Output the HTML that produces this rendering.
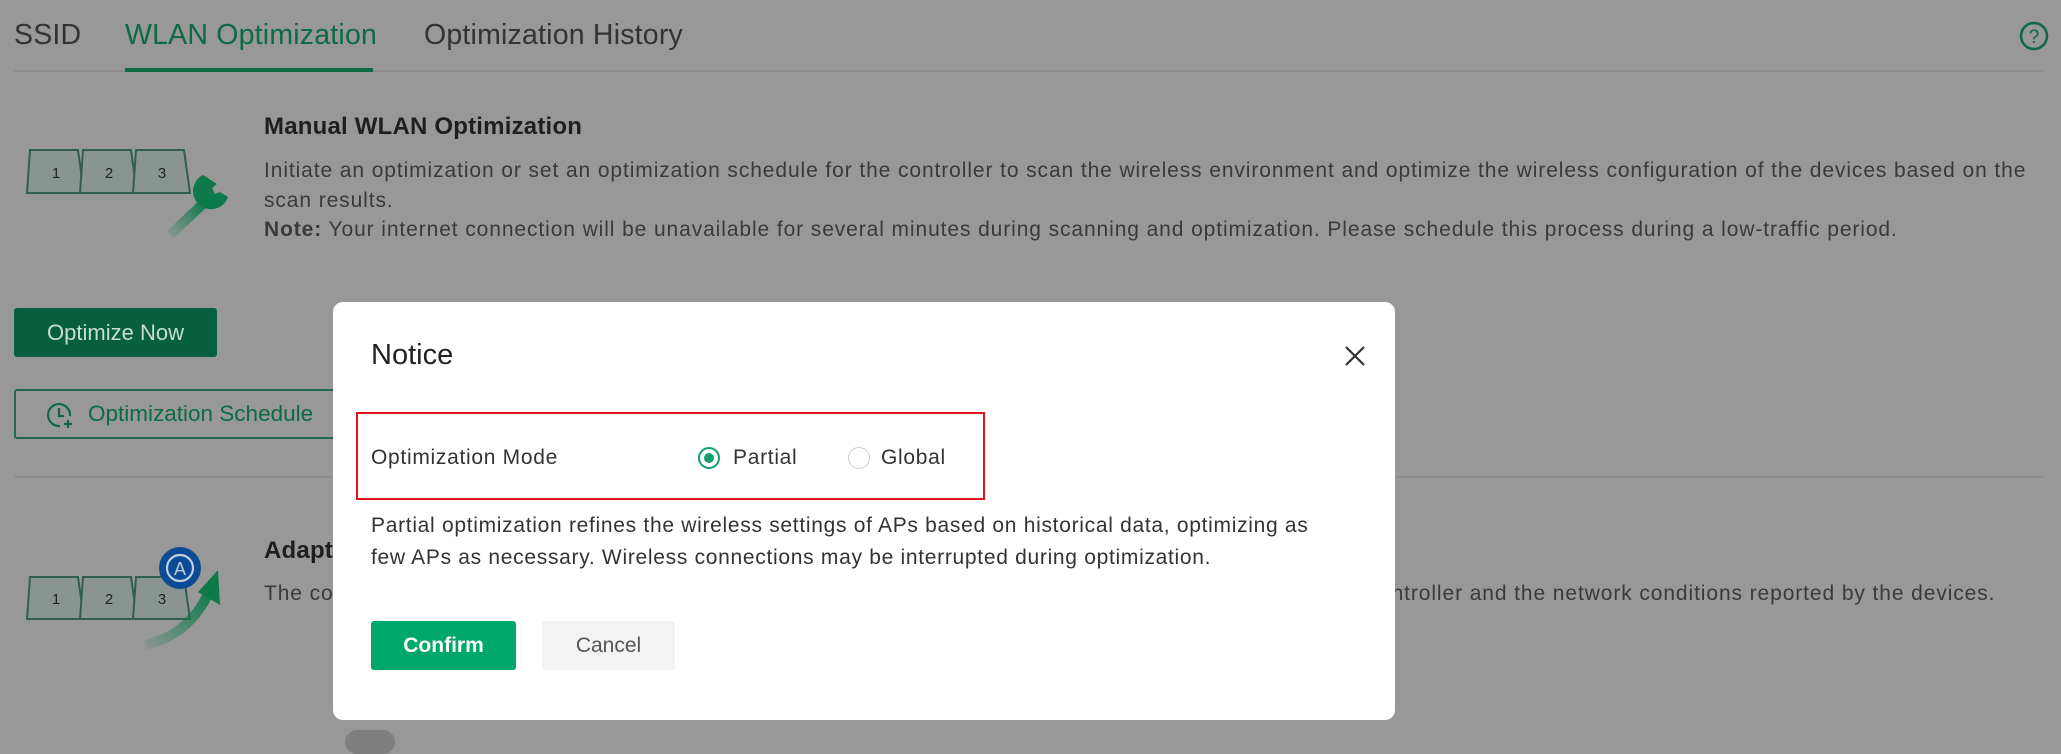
<!DOCTYPE html>
<html><head><meta charset="utf-8"><style>
*{margin:0;padding:0;box-sizing:border-box}
body{width:2061px;height:739px;background:#989898;font-family:"Liberation Sans",sans-serif;position:relative;overflow:hidden;color:#3c3c3c}
.a{position:absolute;white-space:nowrap}
.tab{font-size:28.5px;top:19px;color:#333;letter-spacing:0.2px}
.t{font-size:21px;color:#3a3a3a;letter-spacing:0.9px}
.h{font-size:24px;color:#1f1f1f;font-weight:bold;letter-spacing:0.2px}
.modal{position:absolute;left:333px;top:302px;width:1062px;height:418px;background:#fff;border-radius:10px}
.m{font-size:21px;color:#333;letter-spacing:0.7px}
</style></head><body>
<div class="a tab" style="left:14px">SSID</div>
<div class="a tab" style="left:125px;color:#0c6a45">WLAN Optimization</div>
<div class="a tab" style="left:424px">Optimization History</div>
<div class="a" style="left:14px;top:70px;width:2030px;height:2px;background:#8e8e8e"></div>
<div class="a" style="left:125px;top:68px;width:248px;height:4px;background:#0c6a45"></div>
<svg class="a" style="left:2019px;top:21px" width="30" height="30" viewBox="0 0 30 30"><circle cx="15" cy="15" r="13" fill="none" stroke="#0c6a45" stroke-width="2.5"/><text x="15" y="22" text-anchor="middle" font-size="19" font-family="Liberation Sans" fill="#0c6a45">?</text></svg>

<svg class="a" style="left:20px;top:140px" width="220" height="100" viewBox="0 0 220 100">
<defs><linearGradient id="g" x1="1" y1="0" x2="0" y2="1"><stop offset="0" stop-color="#0e7a4c"/><stop offset="1" stop-color="#0e7a4c" stop-opacity="0.1"/></linearGradient></defs>
<g fill="#8a9591" stroke="#315e52" stroke-width="2"><path d="M10 10H58L64 53H7Z"/><path d="M63 10H111L117 53H60Z"/><path d="M116 10H164L170 53H113Z"/></g>
<g font-size="15" fill="#222" text-anchor="middle"><text x="36" y="38">1</text><text x="89" y="38">2</text><text x="142" y="38">3</text></g>
<path d="M150 95L185 62" stroke="url(#g)" stroke-width="10"/>
<path d="M183 35a18 18 0 1 0 25 22l-8-5 -5 2 -3-6 5-4z" fill="#0e7a4c"/>
</svg>

<div class="a h" style="left:264px;top:113px">Manual WLAN Optimization</div>
<div class="a t" style="left:264px;top:159px">Initiate an optimization or set an optimization schedule for the controller to scan the wireless environment and optimize the wireless configuration of the devices based on the</div>
<div class="a t" style="left:264px;top:189px">scan results.</div>
<div class="a t" style="left:264px;top:218px"><b>Note:</b> Your internet connection will be unavailable for several minutes during scanning and optimization. Please schedule this process during a low-traffic period.</div>

<div class="a" style="left:14px;top:308px;width:203px;height:49px;background:#06603f;border-radius:3px;color:#c9dcd2;font-size:22px;text-align:center;line-height:49px">Optimize Now</div>
<div class="a" style="left:14px;top:389px;width:330px;height:50px;border:2px solid #1f6b4b;border-radius:3px;color:#0c6a45;font-size:22.5px;line-height:46px;padding-left:72px">Optimization Schedule</div>
<svg class="a" style="left:46px;top:400px" width="30" height="30" viewBox="0 0 30 30"><path d="M24 16A11 11 0 1 0 14 26" fill="none" stroke="#0c6a45" stroke-width="2.2"/><path d="M13 8v8h5M22 20v8M18 24h8" stroke="#0c6a45" stroke-width="2.2" fill="none"/></svg>

<div class="a" style="left:14px;top:476px;width:2030px;height:2px;background:#8e8e8e"></div>
<svg class="a" style="left:20px;top:540px" width="220" height="120" viewBox="0 0 220 120">
<defs><linearGradient id="g2" x1="1" y1="0" x2="0" y2="1"><stop offset="0" stop-color="#0e7a4c"/><stop offset="1" stop-color="#0e7a4c" stop-opacity="0.1"/></linearGradient></defs>
<g fill="#8a9591" stroke="#315e52" stroke-width="2"><path d="M10 37H58L64 79H7Z"/><path d="M63 37H111L117 79H60Z"/><path d="M116 37H164L170 79H113Z"/></g>
<g font-size="15" fill="#222" text-anchor="middle"><text x="36" y="64">1</text><text x="89" y="64">2</text><text x="142" y="64">3</text></g>
<path d="M125 105Q170 95 190 50" stroke="url(#g2)" stroke-width="10" fill="none"/>
<path d="M198 30L200 65 178 52Z" fill="#0e7a4c"/>
<circle cx="160" cy="28" r="21" fill="#0b4a94"/>
<circle cx="160" cy="28" r="13" fill="none" stroke="#c0cde0" stroke-width="2.2"/>
<text x="160" y="35" text-anchor="middle" font-size="18" fill="#c0cde0">A</text>
</svg>
<div class="a h" style="left:264px;top:537px">Adapt</div>
<div class="a t" style="left:264px;top:582px">The co</div>
<div class="a t" style="left:1379px;top:582px">ontroller and the network conditions reported by the devices.</div>
<div class="a" style="left:345px;top:730px;width:50px;height:24px;border-radius:12px;background:#7f7f7f"></div>

<div class="modal">
<div class="a" style="left:38px;top:37px;font-size:29px;color:#222">Notice</div>
<svg class="a" style="left:1010px;top:42px" width="24" height="24" viewBox="0 0 24 24"><path d="M3 3L21 21M21 3L3 21" stroke="#333" stroke-width="2.2"/></svg>
<div class="a" style="left:23px;top:110px;width:629px;height:88px;border:2px solid #e0141e"></div>
<div class="a m" style="left:38px;top:144px">Optimization Mode</div>
<div class="a" style="left:365px;top:145px;width:22px;height:22px;border:2px solid #0fa26b;border-radius:50%"></div>
<div class="a" style="left:371px;top:151px;width:10px;height:10px;background:#0fa26b;border-radius:50%"></div>
<div class="a m" style="left:400px;top:144px">Partial</div>
<div class="a" style="left:515px;top:145px;width:22px;height:22px;border:1.5px solid #ccc;border-radius:50%"></div>
<div class="a m" style="left:548px;top:144px">Global</div>
<div class="a m" style="left:38px;top:208px;line-height:32px">Partial optimization refines the wireless settings of APs based on historical data, optimizing as<br>few APs as necessary. Wireless connections may be interrupted during optimization.</div>
<div class="a" style="left:38px;top:319px;width:145px;height:49px;background:#00a76b;border-radius:3px;color:#fff;font-size:21px;font-weight:bold;text-align:center;line-height:49px">Confirm</div>
<div class="a" style="left:209px;top:319px;width:133px;height:49px;background:#f3f3f3;border-radius:3px;color:#555;font-size:21px;text-align:center;line-height:49px">Cancel</div>
</div>
</body></html>
